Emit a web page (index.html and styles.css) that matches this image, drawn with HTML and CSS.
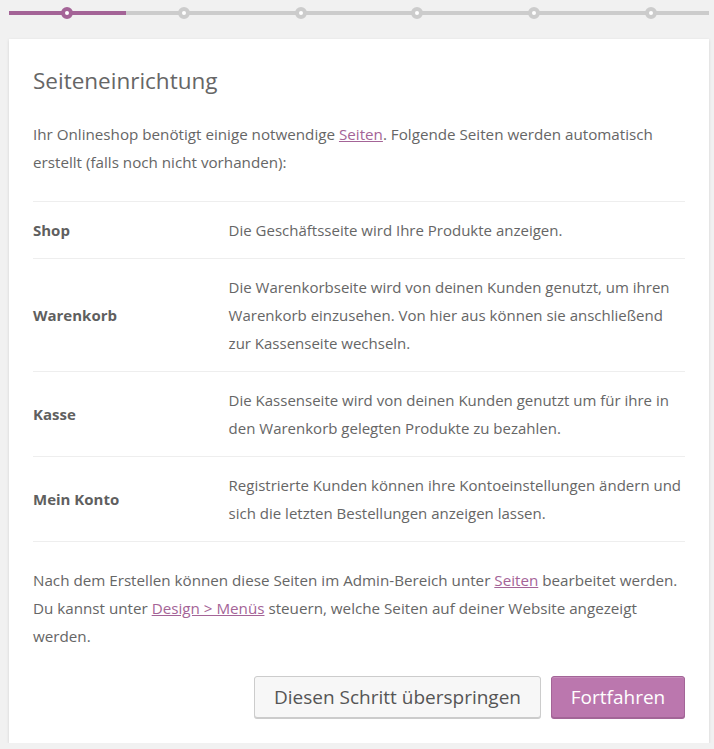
FILE: index.html
```html
<!DOCTYPE html>
<html lang="de">
<head>
<meta charset="utf-8">
<title>Seiteneinrichtung</title>
<link rel="stylesheet" href="styles.css">
</head>
<body>
<ol class="steps">
  <li class="step done"><span class="dot"></span></li>
  <li class="step"><span class="dot"></span></li>
  <li class="step"><span class="dot"></span></li>
  <li class="step"><span class="dot"></span></li>
  <li class="step"><span class="dot"></span></li>
  <li class="step"><span class="dot"></span></li>
</ol>
<main class="card">
  <h1 class="title">Seiteneinrichtung</h1>
  <p class="text">Ihr Onlineshop benötigt einige notwendige <a href="#">Seiten</a>. Folgende Seiten werden automatisch erstellt (falls noch nicht vorhanden):</p>
  <table class="pages">
    <tr>
      <th>Shop</th>
      <td>Die Geschäftsseite wird Ihre Produkte anzeigen.</td>
    </tr>
    <tr>
      <th>Warenkorb</th>
      <td>Die Warenkorbseite wird von deinen Kunden genutzt, um ihren Warenkorb einzusehen. Von hier aus können sie anschließend zur Kassenseite wechseln.</td>
    </tr>
    <tr>
      <th>Kasse</th>
      <td>Die Kassenseite wird von deinen Kunden genutzt um für ihre in den Warenkorb gelegten Produkte zu bezahlen.</td>
    </tr>
    <tr>
      <th>Mein Konto</th>
      <td>Registrierte Kunden können ihre Kontoeinstellungen ändern und sich die letzten Bestellungen anzeigen lassen.</td>
    </tr>
  </table>
  <p class="text after">Nach dem Erstellen können diese Seiten im Admin-Bereich unter <a href="#">Seiten</a> bearbeitet werden. Du kannst unter <a href="#">Design &gt; Menüs</a> steuern, welche Seiten auf deiner Website angezeigt werden.</p>
  <div class="actions">
    <button class="btn btn-skip">Diesen Schritt überspringen</button>
    <button class="btn btn-primary">Fortfahren</button>
  </div>
</main>
</body>
</html>
```
FILE: styles.css
```css
html, body {
  margin: 0;
  padding: 0;
  background: #f1f1f1;
}
body {
  font-family: "Open Sans", "Noto Sans", sans-serif;
  color: #666;
  padding: 0 5px 0 9px;
}
.steps {
  list-style: none;
  margin: 0;
  padding: 8px 0 0;
  display: flex;
  height: 39px;
  box-sizing: border-box;
}
.step {
  flex: 1;
  height: 4px;
  margin-top: 3px;
  background: #ccc;
  position: relative;
  display: flex;
  justify-content: center;
}
.step.done {
  background: #a46497;
}
.dot {
  width: 12px;
  height: 12px;
  border-radius: 50%;
  background: #fff;
  border: 4px solid #ccc;
  box-sizing: border-box;
  margin-top: -4px;
}
.step.done .dot {
  border-color: #a46497;
}
.card {
  background: #fff;
  box-shadow: 0 1px 3px rgba(0,0,0,0.13);
  padding: 24px 24px 25px;
}
.title {
  margin: 0 0 21px;
  font-size: 22.5px;
  font-weight: 400;
  line-height: 36px;
  color: #666;
}
.text {
  margin: 0;
  font-size: 15.2px;
  line-height: 28px;
}
.text a, .text a:visited {
  color: #a46497;
}
.pages {
  width: 100%;
  border-collapse: collapse;
  margin: 25px 0 24px;
  font-size: 15px;
  line-height: 28px;
  border-top: 1px solid #eee;
}
.pages tr {
  border-bottom: 1px solid #eee;
}
.pages th {
  width: 30%;
  text-align: left;
  font-weight: 700;
  padding: 14px 0;
  vertical-align: middle;
  color: #5f5f5f;
}
.pages td {
  padding: 14px 0;
}
.actions {
  display: flex;
  justify-content: flex-end;
  gap: 10px;
  margin-top: 26px;
}
.btn {
  font-family: inherit;
  font-size: 19px;
  height: 42px;
  border-radius: 3px;
  padding: 0 10px;
  cursor: pointer;
}
.btn-skip {
  background: #f7f7f7;
  border: 1px solid #ccc;
  box-shadow: 0 1px 0 #ccc;
  color: #555;
  width: 287px;
}
.btn-primary {
  background: #bb77ae;
  border: 1px solid #a36597;
  box-shadow: inset 0 1px 0 rgba(255,255,255,0.15), 0 1px 0 #a36597;
  color: #fff;
  width: 134px;
}
```
